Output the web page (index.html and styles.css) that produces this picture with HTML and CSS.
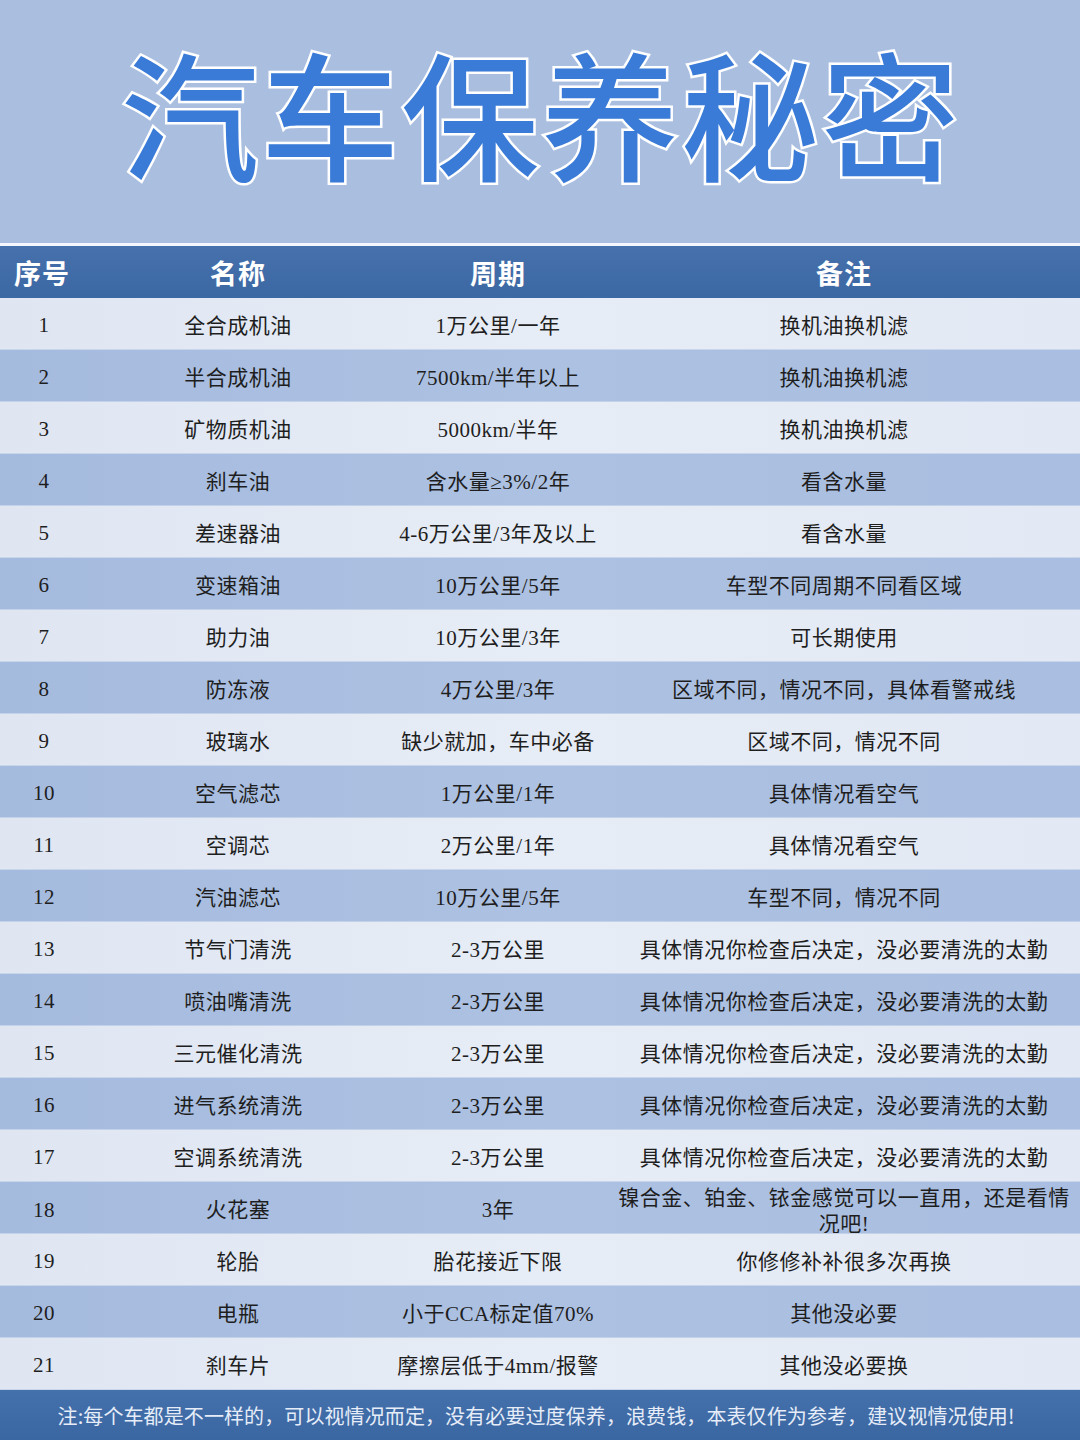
FILE: index.html
```html
<!DOCTYPE html>
<html lang="zh-CN">
<head>
<meta charset="utf-8">
<title>汽车保养秘密</title>
<link rel="stylesheet" href="styles.css">
</head>
<body>
<div class="page">
  <header class="hero">
    <h1 class="title">汽车保养秘密</h1>
  </header>
  <div class="table">
    <div class="row head">
      <div class="c c1">序号</div><div class="c c2">名称</div><div class="c c3">周期</div><div class="c c4">备注</div>
    </div>
    <div class="row light"><div class="c c1">1</div><div class="c c2">全合成机油</div><div class="c c3">1万公里/一年</div><div class="c c4">换机油换机滤</div></div>
    <div class="row dark"><div class="c c1">2</div><div class="c c2">半合成机油</div><div class="c c3">7500km/半年以上</div><div class="c c4">换机油换机滤</div></div>
    <div class="row light"><div class="c c1">3</div><div class="c c2">矿物质机油</div><div class="c c3">5000km/半年</div><div class="c c4">换机油换机滤</div></div>
    <div class="row dark"><div class="c c1">4</div><div class="c c2">刹车油</div><div class="c c3">含水量≥3%/2年</div><div class="c c4">看含水量</div></div>
    <div class="row light"><div class="c c1">5</div><div class="c c2">差速器油</div><div class="c c3">4-6万公里/3年及以上</div><div class="c c4">看含水量</div></div>
    <div class="row dark"><div class="c c1">6</div><div class="c c2">变速箱油</div><div class="c c3">10万公里/5年</div><div class="c c4">车型不同周期不同看区域</div></div>
    <div class="row light"><div class="c c1">7</div><div class="c c2">助力油</div><div class="c c3">10万公里/3年</div><div class="c c4">可长期使用</div></div>
    <div class="row dark"><div class="c c1">8</div><div class="c c2">防冻液</div><div class="c c3">4万公里/3年</div><div class="c c4">区域不同，情况不同，具体看警戒线</div></div>
    <div class="row light"><div class="c c1">9</div><div class="c c2">玻璃水</div><div class="c c3">缺少就加，车中必备</div><div class="c c4">区域不同，情况不同</div></div>
    <div class="row dark"><div class="c c1">10</div><div class="c c2">空气滤芯</div><div class="c c3">1万公里/1年</div><div class="c c4">具体情况看空气</div></div>
    <div class="row light"><div class="c c1">11</div><div class="c c2">空调芯</div><div class="c c3">2万公里/1年</div><div class="c c4">具体情况看空气</div></div>
    <div class="row dark"><div class="c c1">12</div><div class="c c2">汽油滤芯</div><div class="c c3">10万公里/5年</div><div class="c c4">车型不同，情况不同</div></div>
    <div class="row light"><div class="c c1">13</div><div class="c c2">节气门清洗</div><div class="c c3">2-3万公里</div><div class="c c4">具体情况你检查后决定，没必要清洗的太勤</div></div>
    <div class="row dark"><div class="c c1">14</div><div class="c c2">喷油嘴清洗</div><div class="c c3">2-3万公里</div><div class="c c4">具体情况你检查后决定，没必要清洗的太勤</div></div>
    <div class="row light"><div class="c c1">15</div><div class="c c2">三元催化清洗</div><div class="c c3">2-3万公里</div><div class="c c4">具体情况你检查后决定，没必要清洗的太勤</div></div>
    <div class="row dark"><div class="c c1">16</div><div class="c c2">进气系统清洗</div><div class="c c3">2-3万公里</div><div class="c c4">具体情况你检查后决定，没必要清洗的太勤</div></div>
    <div class="row light"><div class="c c1">17</div><div class="c c2">空调系统清洗</div><div class="c c3">2-3万公里</div><div class="c c4">具体情况你检查后决定，没必要清洗的太勤</div></div>
    <div class="row dark"><div class="c c1">18</div><div class="c c2">火花塞</div><div class="c c3">3年</div><div class="c c4 wrap">镍合金、铂金、铱金感觉可以一直用，还是看情况吧!</div></div>
    <div class="row light"><div class="c c1">19</div><div class="c c2">轮胎</div><div class="c c3">胎花接近下限</div><div class="c c4">你修修补补很多次再换</div></div>
    <div class="row dark"><div class="c c1">20</div><div class="c c2">电瓶</div><div class="c c3">小于CCA标定值70%</div><div class="c c4">其他没必要</div></div>
    <div class="row light"><div class="c c1">21</div><div class="c c2">刹车片</div><div class="c c3">摩擦层低于4mm/报警</div><div class="c c4">其他没必要换</div></div>
  </div>
  <footer class="note">注:每个车都是不一样的，可以视情况而定，没有必要过度保养，浪费钱，本表仅作为参考，建议视情况使用!</footer>
</div>
</body>
</html>
```

FILE: styles.css
```css
html, body {
  margin: 0;
  padding: 0;
  background: #aabee0;
}

.page {
  width: 1080px;
  height: 1440px;
  overflow: hidden;
  display: flex;
  flex-direction: column;
  font-family: "Liberation Serif", "Noto Sans CJK SC", sans-serif;
  color: #1e1e1e;
}

.hero {
  height: 243px;
  background: #aabee0;
  display: flex;
  align-items: center;
  justify-content: center;
  border-bottom: 3px solid #f4f7fc;
}

.title {
  margin: 0;
  padding-left: 2px;
  font-family: "Noto Sans CJK SC", sans-serif;
  font-weight: 500;
  font-size: 138px;
  line-height: 1;
  letter-spacing: 2px;
  color: #3a7bd8;
  -webkit-text-stroke: 5px #ffffff;
  paint-order: stroke fill;
  transform: translateY(-12px);
}

.table {
  display: flex;
  flex-direction: column;
}

.row {
  display: grid;
  grid-template-columns: 88px 300px 220px 472px;
  height: 52px;
  align-items: center;
  box-sizing: border-box;
  overflow: hidden;
}

.c {
  text-align: center;
  font-size: 21px;
  letter-spacing: 0.5px;
  white-space: nowrap;
}

.c1 {
  padding-top: 4px;
}

.c4 {
  padding: 0 8px;
}

.c4.wrap {
  white-space: normal;
  line-height: 26px;
  height: 52px;
  overflow: hidden;
  display: flex;
  align-items: center;
  justify-content: center;
  padding-top: 6px;
  box-sizing: border-box;
}

.head {
  background: linear-gradient(#4671ad, #3b67a3);
  color: #ffffff;
}

.head .c {
  font-family: "Noto Sans CJK SC", sans-serif;
  font-weight: 700;
  font-size: 27px;
  letter-spacing: 1px;
  padding-top: 0;
}

.head .c1 {
  text-align: left;
  padding-left: 14px;
}

.light {
  background: linear-gradient(90deg, #dfe6f2, #e7edf6 50%, #e3e9f4);
  border-bottom: 1px solid #c9d5ea;
}

.dark {
  background: linear-gradient(90deg, #a5bbde, #adc1e2 50%, #a9bee0);
  border-bottom: 1px solid #c3d1e9;
}

.note {
  flex: 1;
  background: linear-gradient(#4470ab, #3a66a2);
  color: #e6edf8;
  font-family: "Noto Sans CJK SC", sans-serif;
  font-size: 20px;
  letter-spacing: 0.1px;
  display: flex;
  align-items: center;
  justify-content: center;
  padding-right: 8px;
}
```
